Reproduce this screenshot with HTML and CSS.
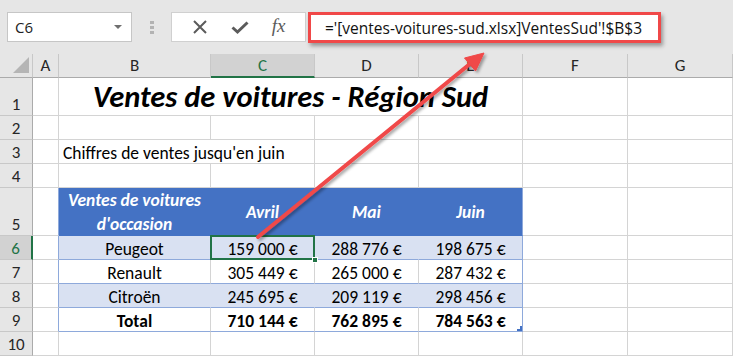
FILE: index.html
```html
<!DOCTYPE html>
<html lang="fr">
<head>
<meta charset="utf-8">
<title>Ventes de voitures</title>
<link rel="stylesheet" href="styles.css">
</head>
<body>
<div class="app">
  <div class="topbar">
    <div class="namebox"><span>C6</span><span class="caret"></span></div>
    <div class="grip"><i></i><i></i><i></i></div>
    <div class="fxbtns">
      <svg class="ico" width="16" height="16" viewBox="0 0 16 16"><path d="M2 2 L14 14 M14 2 L2 14" stroke="#5b5b5b" stroke-width="2" fill="none"/></svg>
      <svg class="ico" width="18" height="16" viewBox="0 0 18 16"><path d="M1.5 8.5 L6.5 13 L16.5 3.5" stroke="#5b5b5b" stroke-width="3" fill="none"/></svg>
      <span class="fx">fx</span>
    </div>
    <div class="formula">='[ventes-voitures-sud.xlsx]VentesSud'!$B$3</div>
  </div>
  <div class="sheet">
    <div class="ch corner"><div class="tri"></div></div>
    <div class="ch">A</div><div class="ch">B</div><div class="ch sel">C</div><div class="ch">D</div><div class="ch">E</div><div class="ch">F</div><div class="ch">G</div>

    <div class="rh">1</div><div class="c"></div><div class="c title">Ventes de voitures - Région Sud</div><div class="c"></div><div class="c"></div>

    <div class="rh">2</div><div class="c"></div><div class="c"></div><div class="c"></div><div class="c"></div><div class="c"></div><div class="c"></div><div class="c"></div>

    <div class="rh">3</div><div class="c"></div><div class="c note">Chiffres de ventes jusqu'en juin</div><div class="c"></div><div class="c"></div><div class="c"></div><div class="c"></div>

    <div class="rh">4</div><div class="c"></div><div class="c"></div><div class="c"></div><div class="c"></div><div class="c"></div><div class="c"></div><div class="c"></div>

    <div class="rh">5</div><div class="c edge"></div><div class="c hd two">Ventes de voitures<br>d'occasion</div><div class="c hd">Avril</div><div class="c hd">Mai</div><div class="c hd last">Juin</div><div class="c"></div><div class="c"></div>

    <div class="rh sel">6</div><div class="c edge"></div><div class="c band">Peugeot</div><div class="c band cur">159 000 €<span class="handle"></span></div><div class="c band">288 776 €</div><div class="c band last">198 675 €</div><div class="c"></div><div class="c"></div>

    <div class="rh">7</div><div class="c edge"></div><div class="c row">Renault</div><div class="c row">305 449 €</div><div class="c row">265 000 €</div><div class="c row last">287 432 €</div><div class="c"></div><div class="c"></div>

    <div class="rh">8</div><div class="c edge"></div><div class="c band">Citroën</div><div class="c band">245 695 €</div><div class="c band">209 119 €</div><div class="c band last">298 456 €</div><div class="c"></div><div class="c"></div>

    <div class="rh">9</div><div class="c edge"></div><div class="c row tot">Total</div><div class="c row tot">710 144 €</div><div class="c row tot">762 895 €</div><div class="c row tot last">784 563 €<span class="resize"></span></div><div class="c"></div><div class="c"></div>

    <div class="rh">10</div><div class="c"></div><div class="c"></div><div class="c"></div><div class="c"></div><div class="c"></div><div class="c"></div><div class="c"></div>
  </div>
  <svg class="arrow" width="733" height="356" viewBox="0 0 733 356">
    <defs>
      <filter id="sh" x="-20%" y="-20%" width="140%" height="140%">
        <feDropShadow dx="2" dy="2" stdDeviation="1.5" flood-color="#000" flood-opacity="0.35"/>
      </filter>
    </defs>
    <g filter="url(#sh)" fill="#f04848" stroke="#f04848">
      <line x1="258" y1="237" x2="471" y2="63" stroke-width="4" stroke-linecap="round"/>
      <polygon points="484,53 475.5,71 464.5,58" stroke-width="1" stroke-linejoin="round"/>
    </g>
  </svg>
</div>
</body>
</html>
```
FILE: styles.css
```css
* { box-sizing: border-box; }
html, body { margin: 0; padding: 0; }
body {
  width: 733px;
  height: 356px;
  overflow: hidden;
  background: #fff;
  font-family: "Carlito", "Lato", "Liberation Sans", sans-serif;
  color: #000;
}
.app { position: relative; width: 733px; height: 356px; }

.topbar {
  height: 54px;
  background: #e6e6e6;
  display: flex;
  align-items: flex-start;
  padding: 12px 0 0 7px;
}
.namebox {
  width: 125px;
  height: 30px;
  background: #fff;
  border: 1px solid #c6c6c6;
  display: flex;
  align-items: center;
  justify-content: space-between;
  padding: 0 9px 0 7px;
  font-family: "Open Sans", "Liberation Sans", sans-serif;
  font-size: 15px;
  color: #222;
}
.caret {
  width: 0; height: 0;
  border-left: 4px solid transparent;
  border-right: 4px solid transparent;
  border-top: 4px solid #6f6f6f;
}
.grip {
  width: 39px;
  height: 30px;
  display: flex;
  flex-direction: column;
  align-items: center;
  justify-content: center;
  gap: 2px;
}
.grip i { width: 4px; height: 3px; background: #b3b3b3; display: block; }
.fxbtns {
  width: 135px;
  height: 30px;
  background: #fff;
  border: 1px solid #d0d0d0;
  display: flex;
  align-items: center;
  justify-content: space-around;
  padding: 0 8px;
}
.fx {
  font-family: "Liberation Serif", serif;
  font-style: italic;
  font-size: 19px;
  color: #5b5b5b;
  margin-top: -2px;
}
.formula {
  margin-left: 2px;
  width: 353px;
  height: 31px;
  background: #fff;
  border: 3px solid #f04848;
  box-shadow: 2px 3px 4px rgba(0,0,0,0.35);
  display: flex;
  align-items: center;
  padding-left: 14px;
  font-family: "Open Sans", "Liberation Sans", sans-serif;
  font-size: 15.5px;
  color: #111;
  white-space: nowrap;
}

.sheet {
  display: grid;
  grid-template-columns: 33px 26px 152px 104px 104px 104px 105px 105px;
  grid-template-rows: 24px 38px 24px 24px 24px 48px 24px 24px 24px 24px 24px;
  font-size: 17.5px;
}
.ch {
  background: #e6e6e6;
  border-right: 1px solid #c8c8c8;
  border-bottom: 1px solid #ababab;
  display: flex;
  align-items: center;
  justify-content: center;
  font-size: 17px;
  color: #262626;
}
.ch.sel {
  background: #d2d2d2;
  color: #217346;
  border-bottom: 2px solid #217346;
}
.corner { justify-content: flex-end; align-items: flex-end; padding: 0 3px 4px 0; }
.tri {
  width: 16px; height: 16px;
  background: #b5b5b5;
  clip-path: polygon(100% 0, 100% 100%, 0 100%);
}
.rh {
  background: #e6e6e6;
  border-right: 1px solid #ababab;
  border-bottom: 1px solid #c8c8c8;
  display: flex;
  align-items: flex-end;
  justify-content: center;
  padding-bottom: 0;
  font-size: 17px;
  line-height: 20px;
  color: #262626;
}
.rh.sel {
  background: #d2d2d2;
  color: #217346;
  border-right: 2px solid #217346;
}
.c {
  position: relative;
  border-right: 1px solid #d4d4d4;
  border-bottom: 1px solid #d4d4d4;
  display: flex;
  align-items: flex-end;
  justify-content: center;
  padding-bottom: 0;
  line-height: 20px;
  white-space: nowrap;
}
.title {
  grid-column: span 4;
  font-size: 30.5px;
  font-weight: bold;
  font-style: italic;
  line-height: 36px;
  padding-bottom: 0;
}
.note {
  grid-column: span 2;
  justify-content: flex-start;
  padding-left: 4px;
}
.edge { border-right-color: #8ea9db; }
.hd {
  background: #4472c4;
  color: #fff;
  font-weight: bold;
  font-style: italic;
  border-right-color: #4472c4;
  border-bottom-color: #4472c4;
  align-items: center;
  text-align: center;
  line-height: 24px;
}
.hd.two { padding-bottom: 0; }
.hd.last { border-right-color: #8ea9db; }
.band {
  background: #d9e1f2;
  border-right-color: #d9e1f2;
  border-bottom-color: #8ea9db;
}
.row { border-bottom-color: #8ea9db; }
.c.last { border-right-color: #8ea9db; }
.tot { font-weight: bold; }
.cur::after {
  content: "";
  position: absolute;
  left: -1px; top: -1px; right: -1px; bottom: -1px;
  border: 2px solid #217346;
}
.handle {
  position: absolute;
  right: -4px; bottom: -4px;
  width: 6px; height: 6px;
  background: #217346;
  border: 1px solid #fff;
  z-index: 2;
}
.resize {
  position: absolute;
  right: 0; bottom: 0;
  width: 5px; height: 5px;
  background: #4472c4;
  clip-path: polygon(100% 0, 100% 100%, 0 100%, 0 60%, 60% 60%, 60% 0);
}
.arrow { position: absolute; left: 0; top: 0; pointer-events: none; }
```
